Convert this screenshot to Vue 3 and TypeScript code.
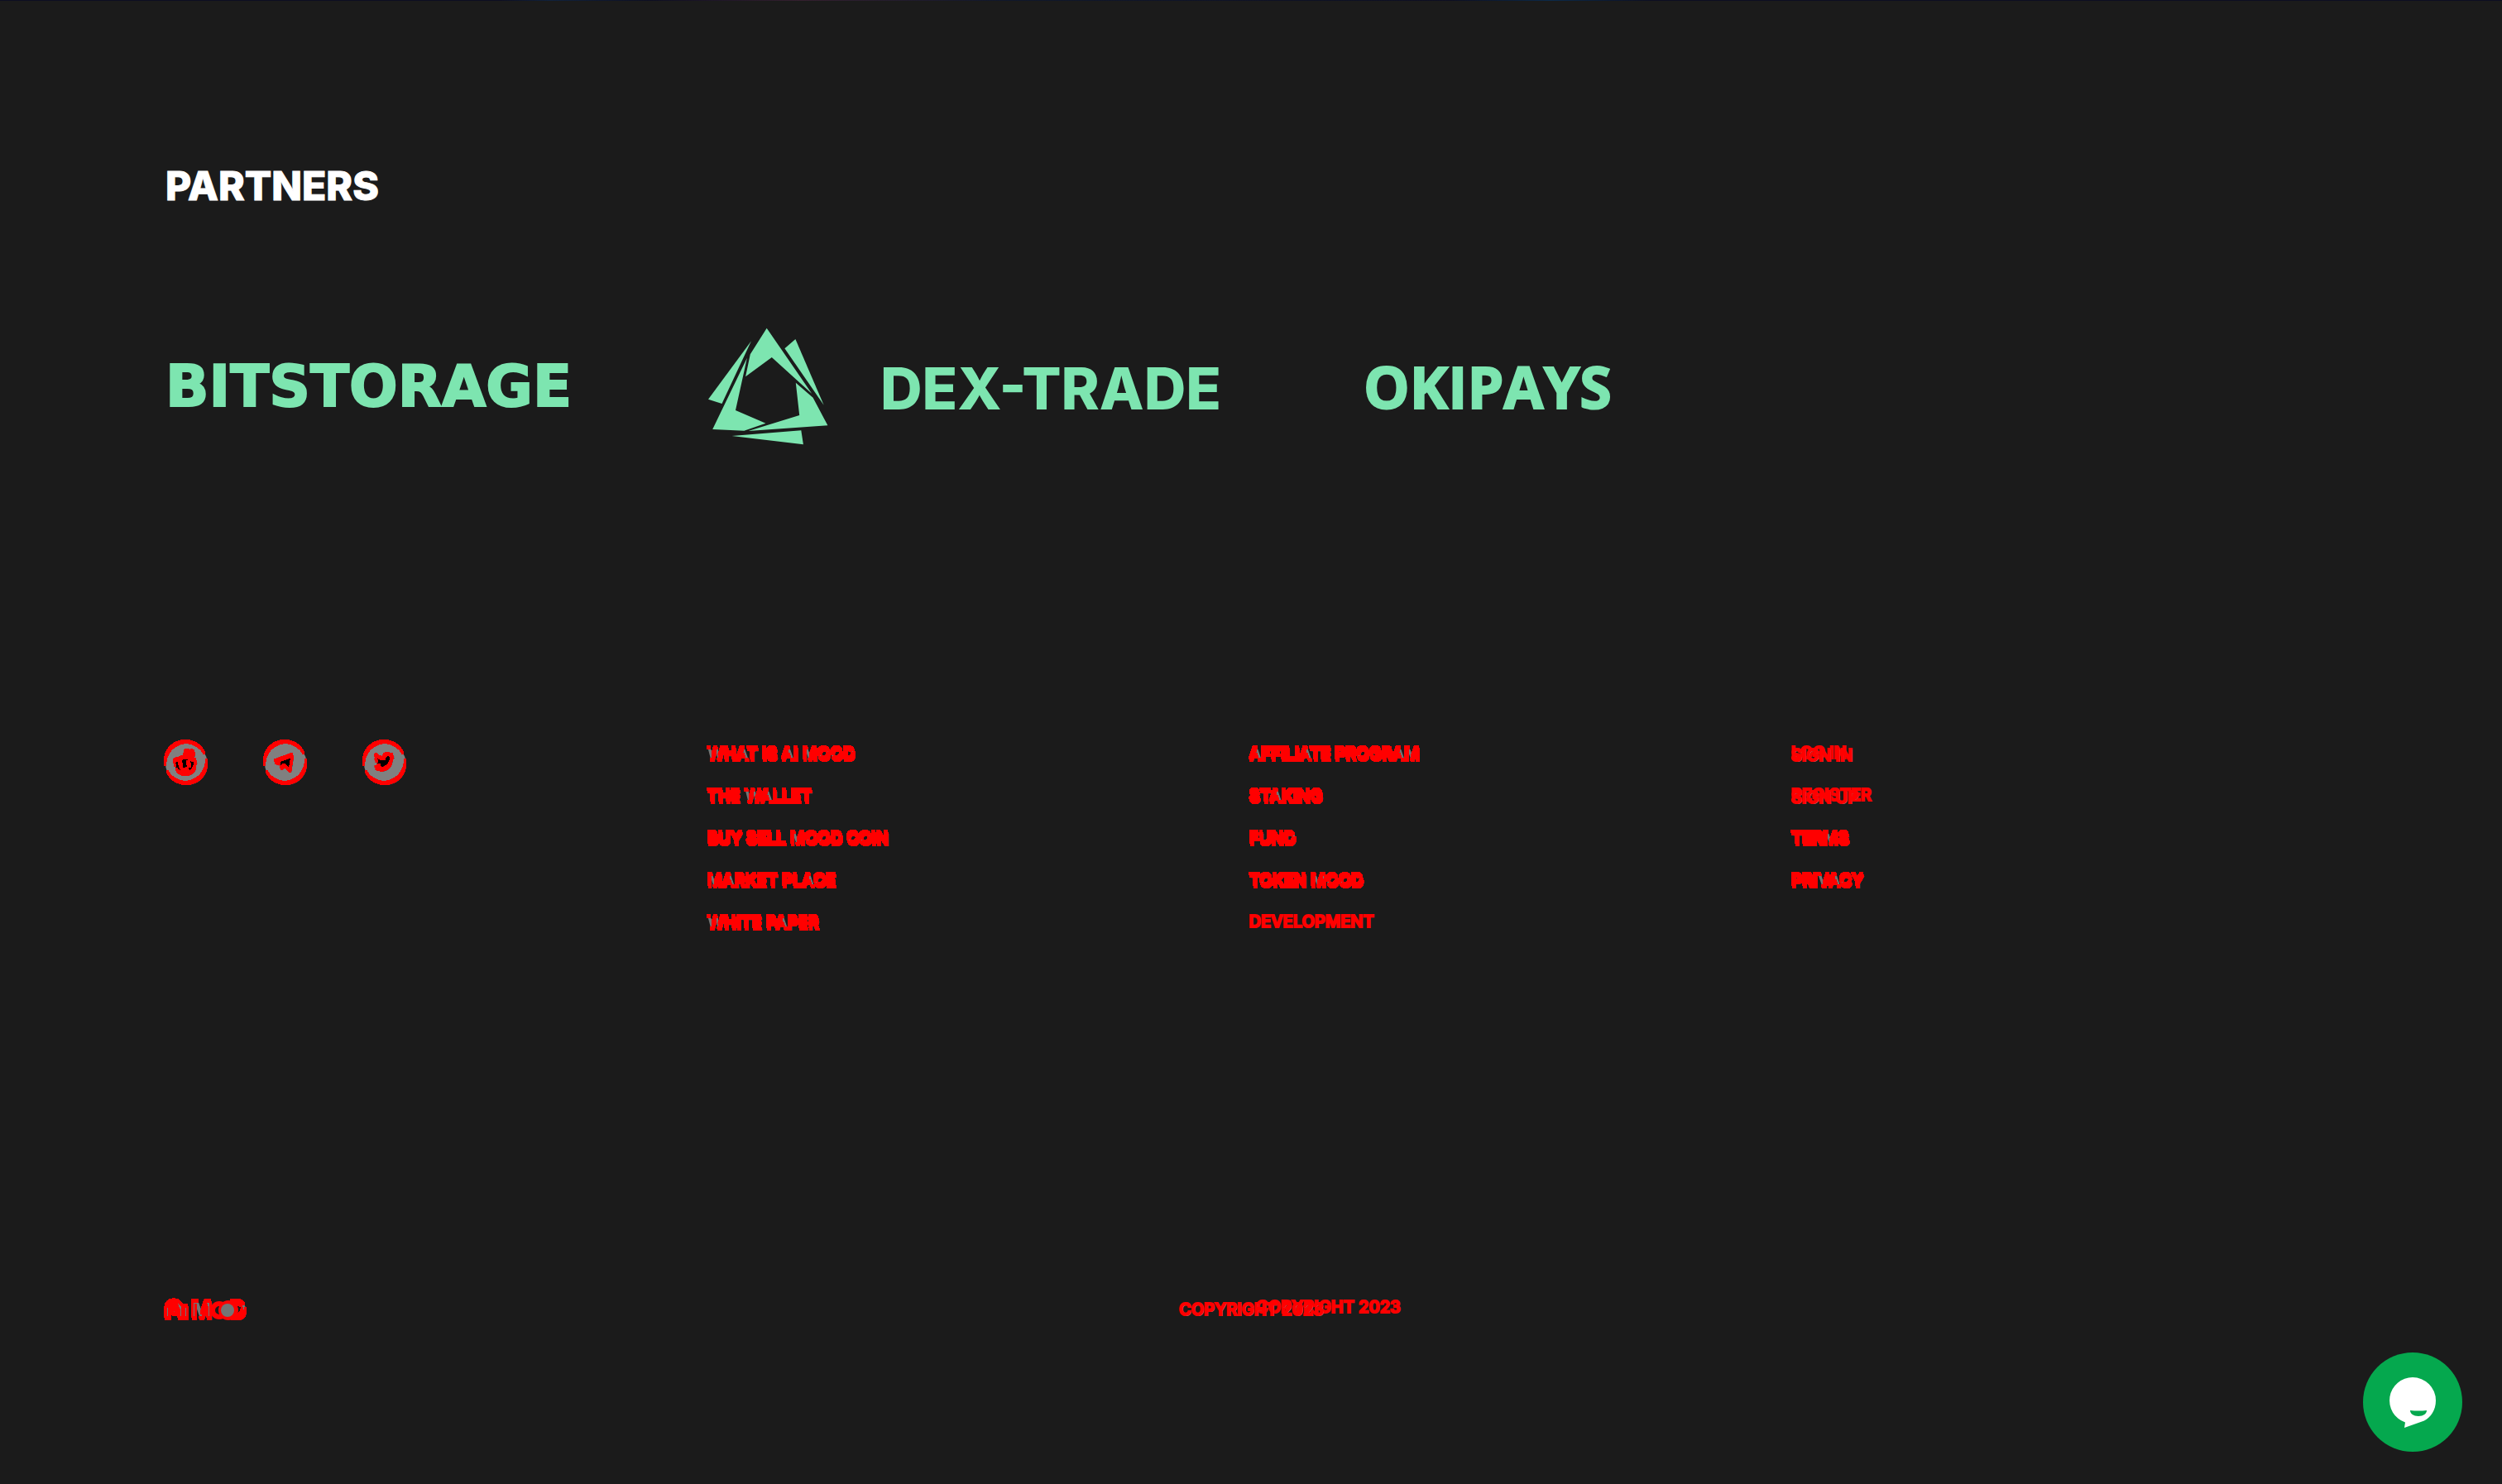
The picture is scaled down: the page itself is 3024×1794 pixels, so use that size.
<script setup lang="ts">
interface FooterLink {
  label: string
  alternate?: string
}

const columns: FooterLink[][] = [
  [
    { label: 'WHAT IS AI MOOD' },
    { label: 'THE WALLET' },
    { label: 'BUY SELL MOOD COIN' },
    { label: 'MARKET PLACE' },
    { label: 'WHITE PAPER' },
  ],
  [
    { label: 'AFFILIATE PROGRAM' },
    { label: 'STAKING' },
    { label: 'FUND' },
    { label: 'TOKEN MOOD' },
    { label: 'DEVELOPMENT' },
  ],
  [
    { label: 'LOG IN', alternate: 'SIGN IN' },
    { label: 'REGISTER', alternate: 'SIGN UP' },
    { label: 'TERMS' },
    { label: 'PRIVACY' },
  ],
]

const isPlain = (link: FooterLink): boolean => link.label === 'DEVELOPMENT' || !!link.alternate
</script>

<template>
  <div class="page">
    <!-- Paints red wherever an element and its shifted copy disagree -->
    <svg class="defs" aria-hidden="true">
      <filter id="ghost" x="-10%" y="-30%" width="120%" height="170%" color-interpolation-filters="sRGB">
        <feOffset in="SourceGraphic" dx="1" dy="3" result="moved" />
        <feOffset in="SourceGraphic" dx="2" dy="4" result="edge" />
        <feComposite in="SourceGraphic" in2="moved" operator="arithmetic" k2="1" k3="-1" result="d1" />
        <feComposite in="moved" in2="SourceGraphic" operator="arithmetic" k2="1" k3="-1" result="d2" />
        <feMerge result="both">
          <feMergeNode in="d1" />
          <feMergeNode in="d2" />
        </feMerge>
        <feColorMatrix in="both" type="matrix" values="0 0 0 0 1  0 0 0 0 0  0 0 0 0 0  0 0 0 40 -14" result="thin" />
        <feMorphology in="thin" operator="dilate" radius="1" result="red" />
        <feMerge>
          <feMergeNode in="edge" />
          <feMergeNode in="moved" />
          <feMergeNode in="red" />
        </feMerge>
      </filter>
    </svg>

    <div class="strip"></div>

    <main class="partners">
      <h2>PARTNERS</h2>
      <div class="logos">
        <a href="#" class="bitstorage">BITSTORAGE</a>
        <a href="#" class="dex">
          <svg width="146" height="142" viewBox="26 26 146 142" fill="currentColor" aria-hidden="true">
            <path d="M96.7 26.7L151.3 106 102.8 62 71.1 85.3 76.8 58.3z" />
            <path d="M78 42.3L26 112.7 42.5 118z" />
            <path d="M72.9 62.7L59 126 95.4 141.7 69.4 150.7 31.2 149z" />
            <path d="M131.4 40L165.7 119.7 118.4 51.3z" />
            <path d="M131.8 92.7L152.6 110.7 170.4 144.3 74.6 151 136.2 132z" />
            <path d="M54.6 157L138.3 150.3 140.9 167.3z" />
          </svg>
          <span>DEX-TRADE</span>
        </a>
        <a href="#" class="okipays">OKIPAYS</a>
      </div>
    </main>

    <footer>
      <div class="columns">
        <div class="social">
          <a href="#" aria-label="Reddit">
            <svg width="52" height="56" viewBox="0 0 52 56">
              <circle class="ghost" cx="25" cy="26" r="25" fill="#808080" />
              <g class="ghost" fill="#000">
                <path fill-rule="evenodd" d="M23 20l2-8 6 1a2.500 2.500 0 1 1-1 2l-4-1-1 6c3 0 6 1 8 3 3-2 6 2 3 4 1 8-5 13-12 13s-12-5-12-12c-3-3 1-7 4-5 2-2 4-3 7-3zM17 26v4h3v-4zm10 0v4h3v-4zM18 34c3 3 8 3 11 0-3 1-8 1-11 0z" />
              </g>
            </svg>
          </a>
          <a href="#" aria-label="Telegram">
            <svg width="52" height="56" viewBox="0 0 52 56">
              <circle class="ghost" cx="25" cy="26" r="25" fill="#808080" />
              <path class="ghost" d="M12 25L34 17l-3 19-7-6-4 3-1-5z" fill="#000" />
            </svg>
          </a>
          <a href="#" aria-label="Twitter">
            <svg width="52" height="56" viewBox="0 0 52 56">
              <circle class="ghost" cx="25" cy="26" r="25" fill="#808080" />
              <path class="ghost" d="M36 18c-1 .5-1.700.7-2.600.8.9-.6 1.600-1.400 2-2.500-.9.500-1.900.9-2.900 1.100a4.600 4.600 0 0 0-7.900 4.200c-3.800-.2-7.200-2-9.500-4.800-1.200 2.100-.6 4.800 1.400 6.100-.8 0-1.500-.2-2.100-.6 0 2.200 1.500 4.200 3.700 4.600-.7.2-1.400.2-2.100.1.600 1.800 2.300 3.200 4.300 3.200-2 1.500-4.300 2.200-6.800 1.900 9.700 6.200 20.300-.5 20-11.700.9-.6 1.800-1.400 2.500-2.400z" fill="#000" />
            </svg>
          </a>
        </div>
        <ul v-for="(column, index) in columns" :key="index">
          <li v-for="link in column" :key="link.label">
            <a href="#" :class="isPlain(link) ? 'plain' : 'ghost'">{{ link.label }}</a>
            <a v-if="link.alternate" href="#" class="alternate">{{ link.alternate }}</a>
          </li>
        </ul>
      </div>

      <div class="bottom">
        <a href="#" class="brand" aria-label="AI MOOD">
          <svg width="110" height="30" viewBox="0 0 110 30">
            <g class="ghost">
              <path d="M3 22V11a8 8 0 0 1 16 0v11" fill="none" stroke="#747474" stroke-width="5" />
              <circle cx="11" cy="14" r="3" fill="#747474" />
              <path d="M25 7v15" stroke="#747474" stroke-width="4" />
              <text x="31" y="22" font-size="28" font-weight="700" fill="#747474">M</text>
              <text x="78" y="22" font-size="28" font-weight="700" fill="#747474">D</text>
            </g>
            <circle cx="66" cy="14" r="8" fill="none" stroke="#f00" stroke-width="6" />
            <circle cx="77" cy="14" r="9" fill="none" stroke="#f00" stroke-width="6" />
            <circle cx="76" cy="14" r="8" fill="#747474" />
          </svg>
        </a>
        <p class="copyright">
          <span class="late">COPYRIGHT 2023</span>
          <span class="early">COPYRIGHT 2023</span>
        </p>
      </div>
    </footer>

    <button class="chat" type="button" aria-label="Open chat">
      <svg width="120" height="120" viewBox="0 0 120 120">
        <path d="M60 30a28 28 0 0 1 28 28c0 12-6 20-14 24.500L50 91l1-6.500A28 28 0 0 1 60 30z" fill="#fff" />
        <path d="M57 70q10 1 20 0c0 4-4 7-10 7s-10-3-10-7z" fill="#05a84e" />
      </svg>
    </button>
  </div>
</template>

<style>
body {
  margin: 0;
  background: #1b1b1b;
}
</style>

<style scoped>
.page {
  min-height: 100vh;
  background: #1b1b1b;
  font-family: Inter, 'Liberation Sans', sans-serif;
}
a {
  color: inherit;
  text-decoration: none;
}
.defs {
  position: absolute;
  width: 0;
  height: 0;
}
.ghost {
  filter: url(#ghost);
}
.strip {
  height: 1px;
  background: linear-gradient(90deg, #0d0e22 0 20%, #10223d 22%, #0d0e22 26%, #35202f 32%, #10182c 40%, #0d0e22 58%, #0b2a4a 62%, #0d0e22 66%);
}
.partners {
  padding: 194px 200px 0;
}
h2 {
  margin: 0;
  font-size: 48px;
  line-height: 60px;
  font-weight: 800;
  color: #fff;
  -webkit-text-stroke: 1px #fff;
}
.logos {
  display: flex;
  align-items: center;
  height: 144px;
  margin-top: 140px;
  color: #7de5b0;
  line-height: 84px;
  white-space: nowrap;
}
.bitstorage {
  flex: 0 0 25%;
  font-family: 'DejaVu Sans', sans-serif;
  font-weight: 700;
  font-size: 69px;
  -webkit-text-stroke: 2px currentColor;
}
.dex {
  display: flex;
  align-items: center;
  gap: 62px;
  font-size: 70px;
  font-weight: 800;
}
.dex svg {
  flex: none;
}
.dex span {
  padding-top: 6px;
}
.okipays {
  margin-left: 172px;
  font-family: 'Open Sans', sans-serif;
  font-weight: 700;
  font-size: 70px;
  -webkit-text-stroke: 2px currentColor;
}
footer {
  padding: 344px 204px 0 199px;
  color: #747474;
  font-size: 20px;
  font-weight: 600;
  font-variation-settings: 'opsz' 32;
}
.columns {
  display: grid;
  grid-template-columns: repeat(4, 1fr);
  min-height: 640px;
}
.social {
  display: flex;
  gap: 68px;
  padding-top: 11px;
}
.social svg {
  display: block;
  overflow: visible;
}
ul {
  margin: 0;
  padding: 2px 0 0;
  list-style: none;
}
li {
  position: relative;
  height: 51px;
  line-height: 51px;
}
li a {
  display: inline-block;
}
.plain,
.alternate,
.copyright {
  color: #f00;
  -webkit-text-stroke: 2px #f00;
}
.alternate {
  position: absolute;
  left: 0;
  top: 3px;
  text-shadow: 1px 1px #747474;
}
.bottom {
  display: grid;
  grid-template-columns: 1226px 1fr;
  align-items: center;
  padding-top: 33px;
}
.brand svg {
  display: block;
  margin-top: 10px;
  overflow: visible;
}
.copyright {
  position: relative;
  margin: 0;
  height: 48px;
  line-height: 48px;
}
.early {
  position: absolute;
  left: 0;
  top: 3px;
  text-shadow: 1px 1px #747474;
}
.late {
  margin-left: 93px;
}
.chat {
  position: fixed;
  right: 48px;
  bottom: 39px;
  width: 120px;
  height: 120px;
  padding: 0;
  border: 0;
  border-radius: 50%;
  background: #05a84e;
}
.chat svg {
  display: block;
}
</style>
